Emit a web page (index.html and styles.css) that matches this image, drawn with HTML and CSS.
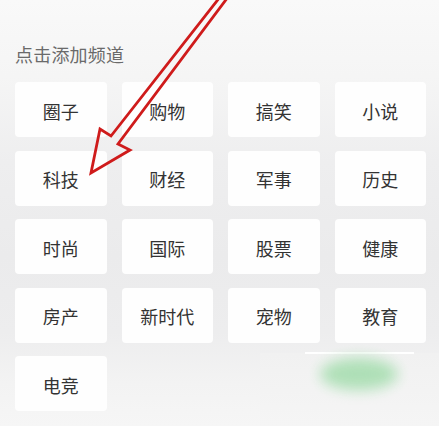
FILE: index.html
```html
<!DOCTYPE html>
<html lang="zh-CN">
<head>
<meta charset="utf-8">
<title>点击添加频道</title>
<link rel="stylesheet" href="styles.css">
</head>
<body>
<div class="page">
  <h2 class="section-title">点击添加频道</h2>
  <div class="channel-grid">
    <div class="channel">圈子</div>
    <div class="channel">购物</div>
    <div class="channel">搞笑</div>
    <div class="channel">小说</div>
    <div class="channel">科技</div>
    <div class="channel">财经</div>
    <div class="channel">军事</div>
    <div class="channel">历史</div>
    <div class="channel">时尚</div>
    <div class="channel">国际</div>
    <div class="channel">股票</div>
    <div class="channel">健康</div>
    <div class="channel">房产</div>
    <div class="channel">新时代</div>
    <div class="channel">宠物</div>
    <div class="channel">教育</div>
    <div class="channel">电竞</div>
  </div>
  <div class="bottom-panel"></div>
  <div class="bottom-line"></div>
  <div class="green-blob"></div>
  <svg class="arrow" width="439" height="426" viewBox="0 0 439 426" xmlns="http://www.w3.org/2000/svg">
    <polygon points="220,-3 111,136 100,129 91,173 130,150 118,144 228,-3" fill="none" stroke="#cf1b1b" stroke-width="2.8" stroke-linejoin="miter"/>
  </svg>
</div>
</body>
</html>
```
FILE: styles.css
```css
* { box-sizing: border-box; }
html, body {
  margin: 0;
  padding: 0;
}
body {
  width: 439px;
  height: 426px;
  overflow: hidden;
  font-family: "Noto Sans CJK SC", "Noto Sans", sans-serif;
}
.page {
  position: relative;
  width: 439px;
  height: 426px;
  padding: 42px 13px 0 15px;
  background: linear-gradient(180deg, #f9f9f9 0%, #f5f5f5 18%, #eeeeef 38%, #ebebec 60%, #ededee 78%, #f3f3f3 90%, #f6f6f6 100%);
  overflow: hidden;
}
.section-title {
  margin: 0 0 16px 0;
  font-size: 18px;
  line-height: 24px;
  font-weight: 400;
  color: #6a6a6a;
  letter-spacing: 0.2px;
}
.channel-grid {
  display: grid;
  grid-template-columns: repeat(4, 1fr);
  grid-auto-rows: 55px;
  column-gap: 15px;
  row-gap: 13.5px;
  width: 411px;
}
.channel {
  display: flex;
  align-items: center;
  justify-content: center;
  background: #fefefe;
  border-radius: 4px;
  font-size: 18px;
  color: #333333;
  padding-top: 2px;
}
.bottom-panel {
  position: absolute;
  left: 260px;
  top: 353px;
  width: 179px;
  height: 73px;
  background: linear-gradient(180deg, #f1f1f1 0%, #f5f5f5 100%);
}
.bottom-line {
  position: absolute;
  left: 305px;
  top: 352px;
  width: 109px;
  height: 2px;
  background: #ffffff;
}
.green-blob {
  position: absolute;
  left: 320px;
  top: 358px;
  width: 78px;
  height: 32px;
  border-radius: 50%;
  background: #abdfb4;
  filter: blur(7px);
  opacity: 0.95;
}
.arrow {
  position: absolute;
  left: 0;
  top: 0;
  pointer-events: none;
}
```
